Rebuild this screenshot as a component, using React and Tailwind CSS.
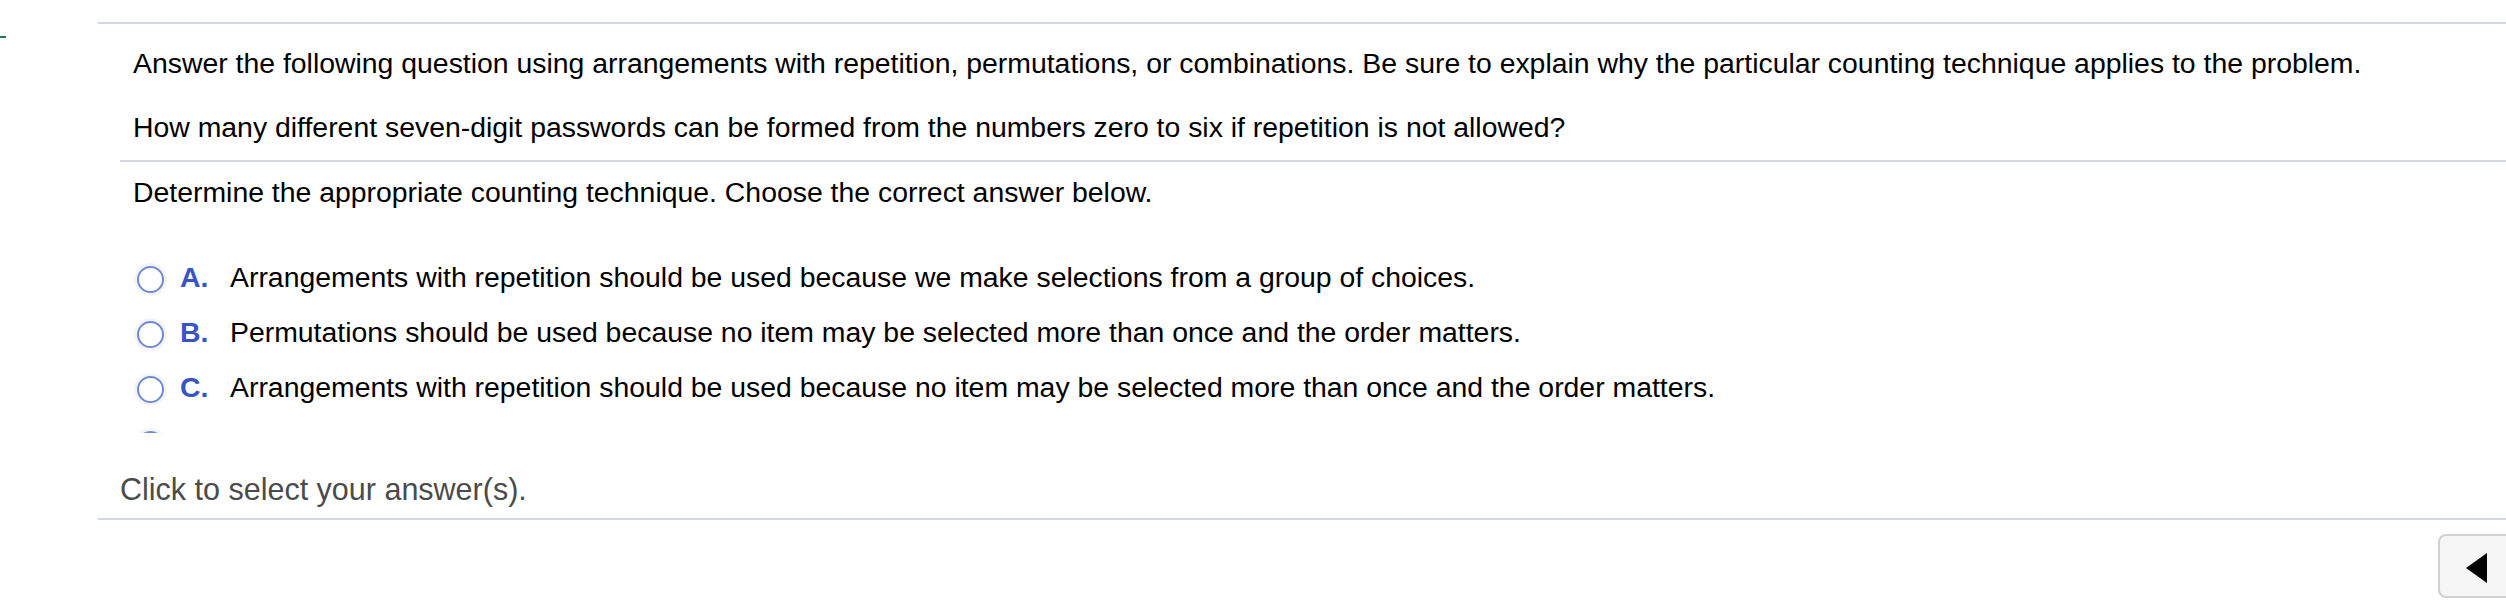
import React from 'react';

const options = [
  { key: 'A', text: 'Arrangements with repetition should be used because we make selections from a group of choices.' },
  { key: 'B', text: 'Permutations should be used because no item may be selected more than once and the order matters.' },
  { key: 'C', text: 'Arrangements with repetition should be used because no item may be selected more than once and the order matters.' },
];

const Radio = () => (
  <span className="mt-[5px] w-[27px] h-[27px] shrink-0 rounded-full border-2 border-[#6f8ad8] bg-white shadow-[0_0_0_3px_#f4f4f6]" />
);

const OptionRow = ({ option }) => (
  <div className="flex items-start h-[32px] mb-[23px]">
    <Radio />
    <span className="ml-[16px] w-[50px] shrink-0 font-bold text-[#3756c4]">{option.key}.</span>
    <span className="text-black whitespace-nowrap">{option.text}</span>
  </div>
);

export default function App() {
  return (
    <div className="w-[2506px] h-[610px] bg-white overflow-hidden flex font-['Liberation_Sans',Arial,sans-serif] text-[28.4px] leading-[32px]">
      {/* left gutter with the little marker */}
      <div className="w-[98px] shrink-0 pt-[36px]">
        <div className="w-[6px] h-[2px] bg-[#1f7a4d]" />
      </div>

      {/* question panel */}
      <div className="flex-1 flex flex-col">
        <div className="mt-[22px] h-[2px] bg-[#d2d7e3]" />

        {/* Question text */}
        <div className="pl-[35px] pt-[23px] text-black">
          <p className="whitespace-nowrap">
            Answer the following question using arrangements with repetition, permutations, or combinations. Be sure to explain why the particular counting technique applies to the problem.
          </p>
          <p className="mt-[32px] whitespace-nowrap">
            How many different seven-digit passwords can be formed from the numbers zero to six if repetition is not allowed?
          </p>
        </div>

        <div className="ml-[22px] mt-[17px] h-[2px] bg-[#d2d7e3]" />

        {/* Answer area */}
        <div className="pl-[35px] pt-[14px] text-black">
          <p className="whitespace-nowrap">Determine the appropriate counting technique. Choose the correct answer below.</p>
        </div>
        <div className="h-[225px] overflow-hidden pl-[39px] pt-[53px]">
          {options.map((o) => (
            <OptionRow key={o.key} option={o} />
          ))}
          {/* next choice, scrolled out of view */}
          <div className="flex items-start h-[32px]">
            <Radio />
          </div>
        </div>

        <p className="pl-[22px] mt-[39px] text-[30.5px] leading-[34px] text-[#4b4b4b]">Click to select your answer(s).</p>

        <div className="mt-[12px] h-[2px] bg-[#d2d7e3]" />

        {/* navigation */}
        <div className="flex justify-end mt-[14px]">
          <button className="w-[77px] h-[64px] mr-[-9px] shrink-0 flex items-center justify-center rounded-[8px] border-2 border-[#d0d0d0] bg-[#f6f6f6]">
            <svg width="21" height="30" viewBox="0 0 21 30" className="mt-[4px]">
              <polygon points="21,0 21,30 0,15" fill="#000" />
            </svg>
          </button>
        </div>
      </div>
    </div>
  );
}
